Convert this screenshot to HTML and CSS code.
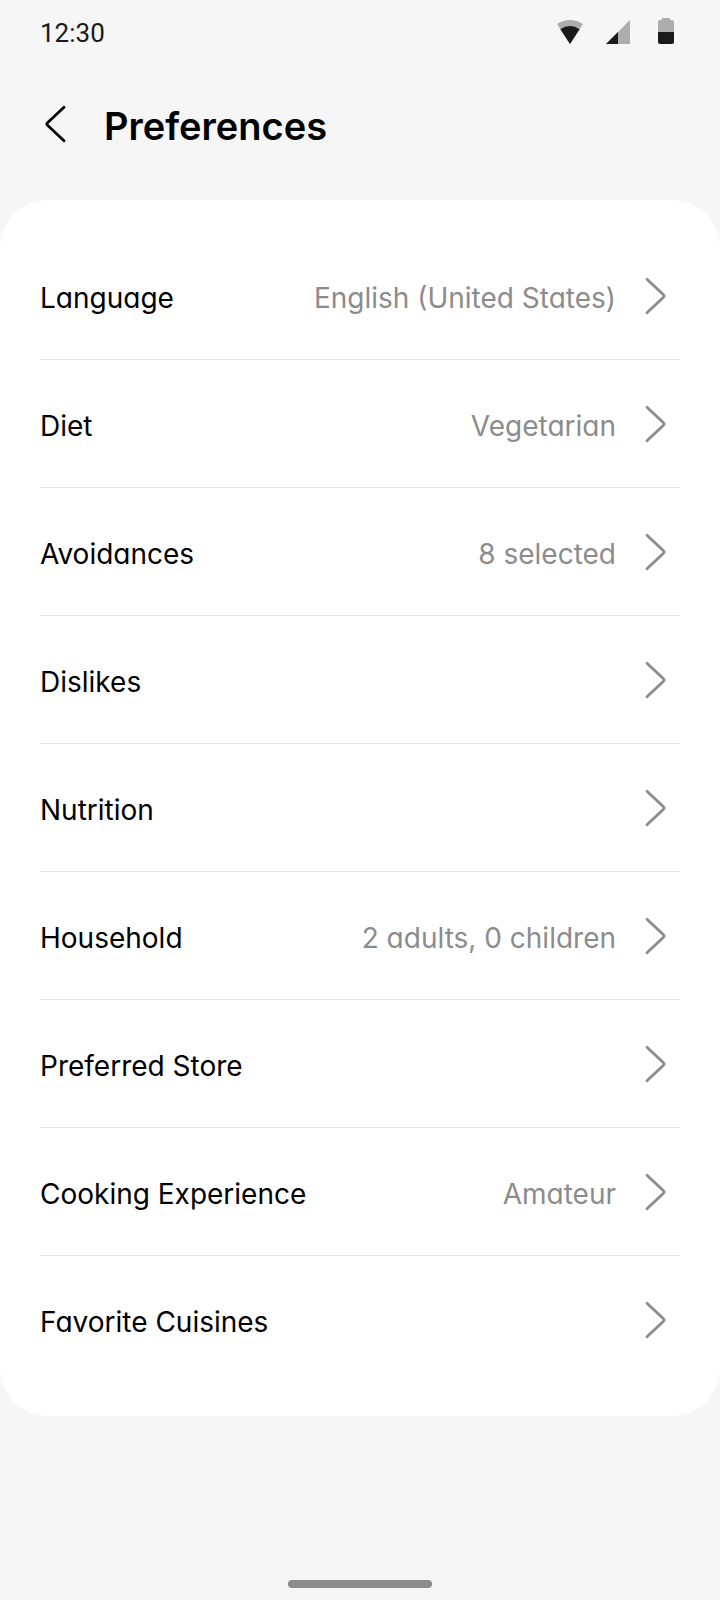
FILE: index.html
```html
<!DOCTYPE html>
<html lang="en">
<head>
  <meta charset="UTF-8" />
  <meta name="viewport" content="width=device-width, initial-scale=1.0"/>
  <title>Preferences</title>
  <link rel="stylesheet" href="styles.css">
</head>
<body>

  <!-- Shared icons -->
  <svg class="sprite" aria-hidden="true">
    <symbol id="chevron" viewBox="0 0 24 40">
      <path d="M4 3.3 L20.5 18.8 Q21.8 20 20.5 21.2 L4 36.7" fill="none" stroke="currentColor" stroke-width="2.8" stroke-linecap="round" stroke-linejoin="round"/>
    </symbol>
  </svg>

  <!-- Status bar -->
  <div class="status-bar">
    <span class="time">12:30</span>
    <div class="status-icons">
      <svg width="28" height="28" viewBox="0 0 28 28" aria-hidden="true">
        <path d="M14 26 L1 6 Q14 -2 27 6 Z" fill="#adadad"/>
        <path d="M14 26 L4.4 11.2 Q14 5 23.6 11.2 Z" fill="#1a1a1a"/>
      </svg>
      <svg width="28" height="28" viewBox="0 0 28 28" aria-hidden="true">
        <path d="M26 2 V26 H2 Z" fill="#adadad"/>
        <path d="M14 14 V26 H2 Z" fill="#1a1a1a"/>
      </svg>
      <svg width="28" height="28" viewBox="0 0 28 28" aria-hidden="true">
        <path d="M6 14 V4 Q6 2 8 2 H10 V0 H18 V2 H20 Q22 2 22 4 V14 Z" fill="#adadad"/>
        <path d="M6 14 H22 V24 Q22 26 20 26 H8 Q6 26 6 24 Z" fill="#1a1a1a"/>
      </svg>
    </div>
  </div>

  <!-- Header -->
  <header class="page-header">
    <button type="button" class="back-btn" aria-label="Back">
      <svg width="24" height="40" aria-hidden="true"><use href="#chevron"/></svg>
    </button>
    <h1>Preferences</h1>
  </header>

  <!-- Preferences list -->
  <main class="card">
    <ul class="pref-list">
      <li><a href="#language" class="pref-row">
        <span class="label">Language</span>
        <span class="value">English (United States)</span>
        <svg class="arrow" aria-hidden="true"><use href="#chevron"/></svg>
      </a></li>
      <li><a href="#diet" class="pref-row">
        <span class="label">Diet</span>
        <span class="value">Vegetarian</span>
        <svg class="arrow" aria-hidden="true"><use href="#chevron"/></svg>
      </a></li>
      <li><a href="#avoidances" class="pref-row">
        <span class="label">Avoidances</span>
        <span class="value">8 selected</span>
        <svg class="arrow" aria-hidden="true"><use href="#chevron"/></svg>
      </a></li>
      <li><a href="#dislikes" class="pref-row">
        <span class="label">Dislikes</span>
        <svg class="arrow" aria-hidden="true"><use href="#chevron"/></svg>
      </a></li>
      <li><a href="#nutrition" class="pref-row">
        <span class="label">Nutrition</span>
        <svg class="arrow" aria-hidden="true"><use href="#chevron"/></svg>
      </a></li>
      <li><a href="#household" class="pref-row">
        <span class="label">Household</span>
        <span class="value">2 adults, 0 children</span>
        <svg class="arrow" aria-hidden="true"><use href="#chevron"/></svg>
      </a></li>
      <li><a href="#store" class="pref-row">
        <span class="label">Preferred Store</span>
        <svg class="arrow" aria-hidden="true"><use href="#chevron"/></svg>
      </a></li>
      <li><a href="#experience" class="pref-row">
        <span class="label">Cooking Experience</span>
        <span class="value">Amateur</span>
        <svg class="arrow" aria-hidden="true"><use href="#chevron"/></svg>
      </a></li>
      <li><a href="#cuisines" class="pref-row">
        <span class="label">Favorite Cuisines</span>
        <svg class="arrow" aria-hidden="true"><use href="#chevron"/></svg>
      </a></li>
    </ul>
  </main>

  <!-- Home indicator -->
  <div class="home-bar"></div>

</body>
</html>
```

FILE: styles.css
```css
/* Global Styles */
* {
  box-sizing: border-box;
}

body {
  display: flex;
  flex-direction: column;
  min-height: 100vh;
  margin: 0;
  font-family: Inter, "Open Sans", sans-serif;
  font-feature-settings: "cv11";
  background-color: #f6f6f6;
  color: #000;
}

.sprite {
  display: none;
}

/* Status Bar */
.status-bar {
  display: flex;
  justify-content: space-between;
  align-items: flex-start;
  padding: 18px 40px 16px;
  color: #1a1a1a;
}

.time {
  font-family: Roboto, sans-serif;
  font-size: 26px;
  line-height: 30px;
}

.status-icons {
  display: flex;
  gap: 20px;
}

/* Header */
.page-header {
  display: flex;
  align-items: center;
  gap: 32px;
  padding: 34px 40px 50px;
}

.back-btn {
  display: flex;
  padding: 4px;
  border: none;
  background: none;
  color: #000;
  cursor: pointer;
}

.back-btn svg {
  transform: rotate(180deg);
}

h1 {
  margin: 0;
  padding-top: 4px;
  font-size: 38px;
  line-height: 48px;
  font-weight: 600;
}

/* Preferences Card */
.card {
  padding: 32px 40px;
  border-radius: 48px;
  background-color: #fff;
}

.pref-list {
  list-style: none;
  margin: 0;
  padding: 0;
}

.pref-row {
  display: flex;
  align-items: center;
  min-height: 128px;
  padding-right: 13px;
  border-bottom: 1px solid #e5e5e5;
  font-size: 28px;
  line-height: 36px;
  color: #000;
  text-decoration: none;
}

.pref-list li:last-child .pref-row {
  border-bottom-color: transparent;
}

.label,
.value {
  padding-top: 4px;
}

.value {
  margin-left: auto;
  color: #8c8c8c;
}

.arrow {
  width: 24px;
  height: 40px;
  margin-left: 27px;
  color: #8c8c8c;
}

.label + .arrow {
  margin-left: auto;
}

/* Home Indicator */
.home-bar {
  width: 20%;
  height: 8px;
  margin: auto auto 12px;
  border-radius: 4px;
  background-color: #8c8c8c;
}
```
